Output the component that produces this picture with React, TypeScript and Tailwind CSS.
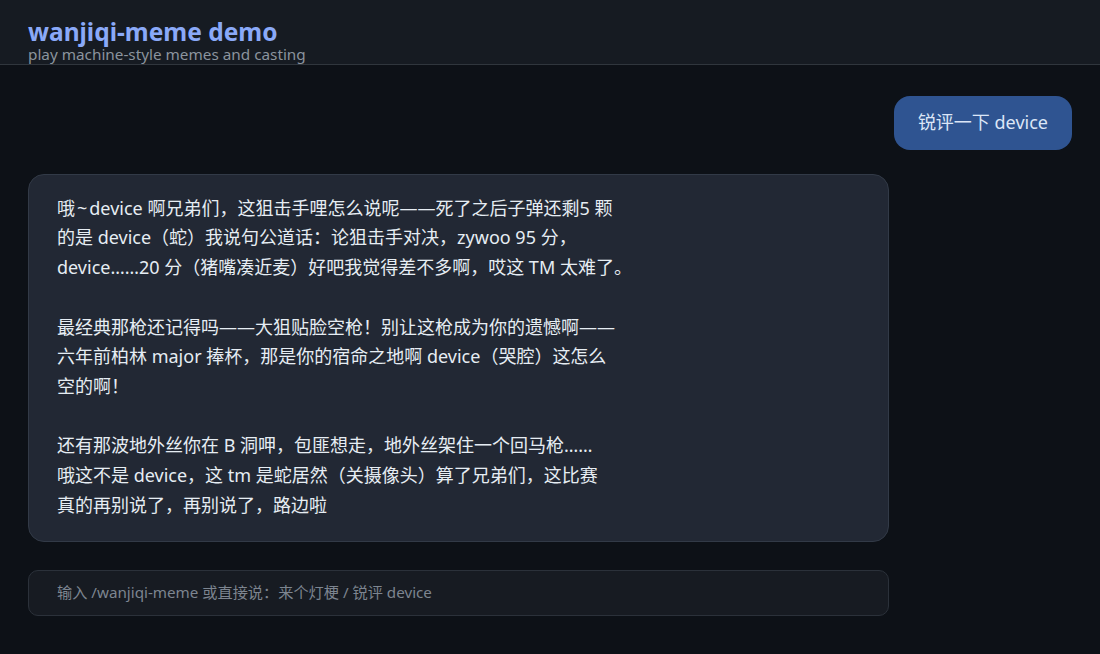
import React from 'react';

const App: React.FC = () => {
  return (
    <div
      className="flex min-h-[654px] w-full flex-col bg-[#0d1117] text-[#e6edf3]"
      style={{ fontFamily: '"Noto Sans", "Noto Sans CJK SC", sans-serif' }}
    >
      <header className="border-b border-[#30363d] bg-[#161b22] px-7 pt-[19px] pb-[1px]">
        <h1 className="text-[24.5px] font-bold leading-[26px] text-[#8aa9f8]">wanjiqi-meme demo</h1>
        <p className="text-[15.3px] leading-[18px] text-[#8b949e]">play machine-style memes and casting</p>
      </header>

      <main className="flex flex-col px-7 pt-[31px]">
        <div className="flex justify-end">
          <div className="rounded-2xl bg-[#2f5491] px-6 py-3 text-[18px] leading-[29.7px] text-[#dce6f7]">
            锐评一下 device
          </div>
        </div>

        <div className="mt-[24px] w-[861px] whitespace-pre-wrap rounded-2xl border border-[#323a47] bg-[#222834] px-7 pt-[19px] pb-[21px] text-[18px] leading-[29.7px] text-[#e6edf3]">
          <p>
            哦<span className="mx-[2px]">~</span>device 啊兄弟们，这狙击手哩怎么说呢——死了之后子弹还剩5 颗
            {'\n'}的是 device（蛇）我说句公道话：论狙击手对决，zywoo 95 分，
            {'\n'}device……20 分（猪嘴凑近麦）好吧我觉得差不多啊，哎这 TM 太难了。
          </p>
          <p className="mt-[29.7px]">
            最经典那枪还记得吗——大狙贴脸空枪！别让这枪成为你的遗憾啊——
            {'\n'}六年前柏林 major 捧杯，那是你的宿命之地啊 device（哭腔）这怎么
            {'\n'}空的啊！
          </p>
          <p className="mt-[29.7px]">
            还有那波地外丝你在 B 洞呷，包匪想走，地外丝架住一个回马枪……
            {'\n'}哦这不是 device，这 tm 是蛇居然（关摄像头）算了兄弟们，这比赛
            {'\n'}真的再别说了，再别说了，路边啦
          </p>
        </div>

        <div className="mt-[28px] flex h-[46px] w-[861px] items-center rounded-[10px] border border-[#2b313a] bg-[#171b22] px-7 pb-[3px]">
          <span className="text-[15.2px] text-[#7d8590]">输入 /wanjiqi-meme 或直接说：来个灯梗 / 锐评 device</span>
        </div>
      </main>
    </div>
  );
};

export default App;
